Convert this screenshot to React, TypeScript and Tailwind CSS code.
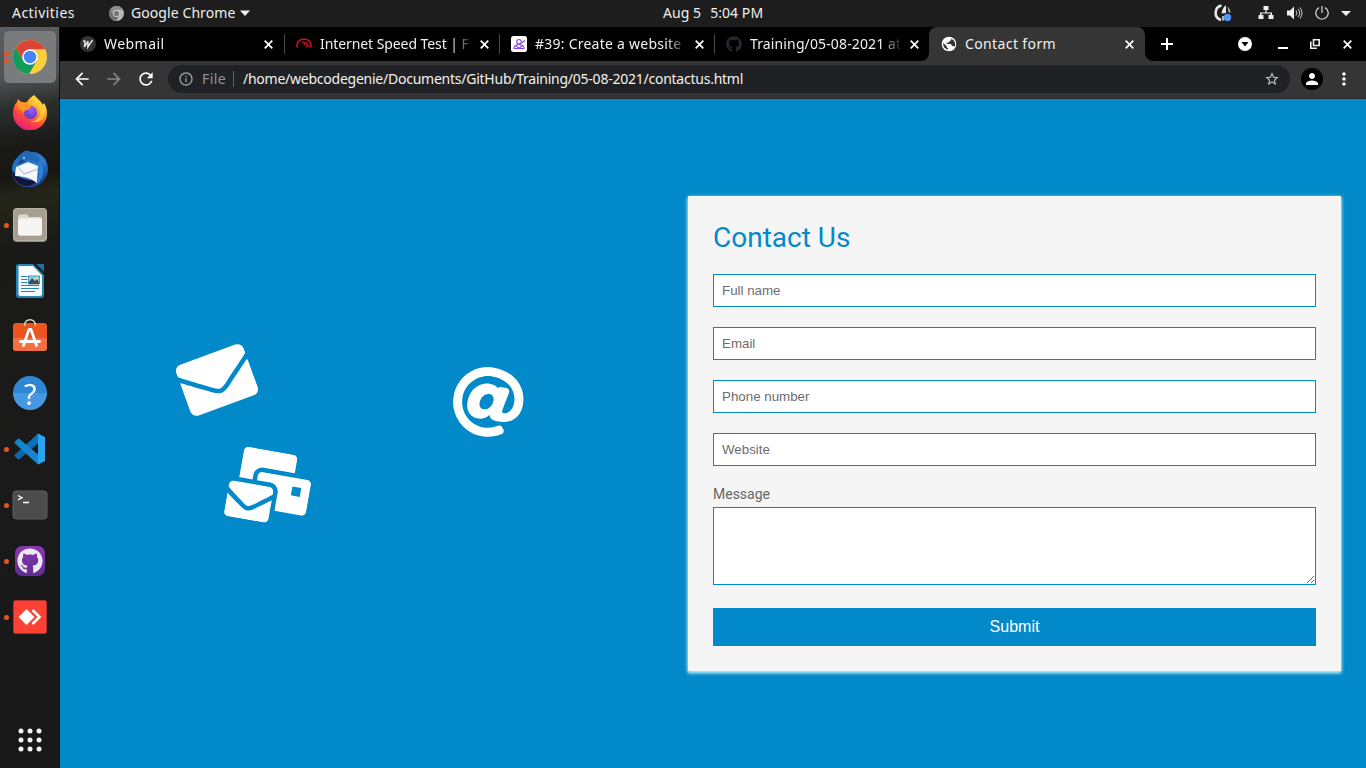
import React from "react";
import { FaEnvelope, FaMailBulk, FaAt, FaGithub } from "react-icons/fa";
import { MdArrowBack, MdArrowForward, MdRefresh, MdInfoOutline, MdStarBorder, MdPerson, MdMoreVert } from "react-icons/md";

function Chrome({ size, gray = false }: { size: number; gray?: boolean }) {
  const c = gray ? ["#8d8d8d", "#b9b9b9", "#6f6f6f", "#777", "#ddd"] : ["#db4437", "#ffcd40", "#0f9d58", "#4285f4", "#fff"];
  return (
    <svg width={size} height={size} viewBox="0 0 48 48">
      <circle cx="24" cy="24" r="24" fill={c[1]} />
      <path d="M24 13h21.3A24 24 0 0 0 3.9 11L14.5 29.5 24 24z" fill={c[0]} />
      <path d="M3.9 11A24 24 0 0 0 22.7 48L33.5 29.5 24 24l-9.5 5.5z" fill={c[2]} />
      <circle cx="24" cy="24" r="11" fill={c[4]} />
      <circle cx="24" cy="24" r="8.8" fill={c[3]} />
    </svg>
  );
}

const Firefox = () => (
  <svg className="-mt-[2px]" width="36" height="36" viewBox="0 0 36 36">
    <defs>
      <linearGradient id="ff" x1="0.8" y1="0" x2="0.25" y2="1">
        <stop offset="0" stopColor="#fff44f" />
        <stop offset=".35" stopColor="#ffa22b" />
        <stop offset=".65" stopColor="#ff4a3d" />
        <stop offset="1" stopColor="#e41686" />
      </linearGradient>
      <radialGradient id="ffp" cx=".55" cy=".3" r=".7">
        <stop offset="0" stopColor="#a05bff" />
        <stop offset="1" stopColor="#5b39c4" />
      </radialGradient>
    </defs>
    <path d="M22 1c2 2 4 4 6 6 1 1 2 2 2 4l2-2c2 3 3 6 3 10a17 17 0 0 1-34 1C1 15 2 11 5 8l1-3 4 4 5-1c1-2 4-5 7-7z" fill="url(#ff)" />
    <circle cx="18.500" cy="18.500" r="6.500" fill="url(#ffp)" />
    <path d="M6 8c4-1 7 0 9 3l4 1c0 2-2 3-4 4-2 0-3 2-4 3-1-3-3-4-5-5z" fill="#ff9424" />
    <path d="M20 10c5 0 9 4 8 10-1 5-6 8-10 7 9 4 16-3 15-11-1-5-5-9-9-12-2 2-2 4-4 6z" fill="#ffd13b" opacity=".75" />
  </svg>
);

const Thunderbird = () => (
  <svg width="38" height="38" viewBox="0 0 38 38">
    <defs>
      <linearGradient id="tb" x1=".2" y1="0" x2=".8" y2="1">
        <stop offset="0" stopColor="#1b63b5" />
        <stop offset=".5" stopColor="#2d7fd2" />
        <stop offset="1" stopColor="#17337c" />
      </linearGradient>
    </defs>
    <path d="M12 2c3-2 6-1 8 0 9-1 17 7 17 17 0 9-6 16-15 18C10 39 0 31 1 19c0-7 5-12 11-17z" fill="url(#tb)" />
    <path d="M1 20c6 8 16 12 26 10-3 3-5 5-9 6C9 37 1 30 1 20z" fill="#14143a" />
    <path d="M8 6c5-5 15-4 20 2l2 9c-5-6-10-8-17-7l-6 3z" fill="#2368b6" />
    <path d="M4 26l1-9 12-5 10 4-1 17q-9-7-22-7z" fill="#f4f6fa" />
    <path d="M6 16l7 8 14-5" fill="none" stroke="#a9b0bd" strokeWidth="1" />
    <path d="M6 15l4-5 5 1-7 3z" fill="#143f87" />
    <circle cx="13" cy="8" r=".9" fill="#cfe2f7" />
    <path d="M27 10c7 7 7 16-1 25 2-8 3-14 1-25z" fill="#2a83d4" />
  </svg>
);

const Files = () => (
  <svg width="36" height="36" viewBox="0 0 36 36">
    <rect x="1" y="1" width="34" height="34" rx="4" fill="#938b7c" />
    <rect x="1.500" y="1.500" width="33" height="32" rx="3.500" fill="#a69f91" stroke="#b8b2a5" />
    <path d="M6 10q0-2.500 2.500-2.500H15l2 2.500h11q2 0 2 2v14q0 2.500-2.500 2.500h-19Q6 28.500 6 26z" fill="#dedad2" />
    <rect x="6" y="11.500" width="24" height="17" rx="2.500" fill="#f6f5f3" />
  </svg>
);

const Writer = () => (
  <svg width="30" height="36" viewBox="0 0 30 36">
    <path d="M4 1h14l11 11v20q0 3-3 3H4q-3 0-3-3V4q0-3 3-3z" fill="#2585b5" />
    <path d="M3.500 3H18l9 9.500V31q0 2-2 2H5.500q-2 0-2-2z" fill="#f8fafb" />
    <path d="M21 1h8v8z" fill="#1c719c" />
    <path d="M6 13.500h6.500M6 16.500h6.500M6 19.500h6.500M6 22.500h18M6 25.500h18M6 28.500h14" stroke="#2683b3" strokeWidth="1.200" />
    <rect x="13.500" y="13" width="11" height="8" fill="#8ed1f1" stroke="#2683b3" strokeWidth=".8" />
    <path d="M14 21v-2l3-4 3 3 2-2 2 3v2z" fill="#4a4a4a" />
    <circle cx="22" cy="15" r="1.200" fill="#f8df59" />
  </svg>
);

const Software = () => (
  <svg className="-mt-[3px]" width="36" height="36" viewBox="0 0 36 36">
    <rect x="1" y="5" width="34" height="28" rx="3" fill="#e95420" />
    <path d="M1 20h34v10q0 3-3 3H4q-3 0-3-3z" fill="#f26f41" />
    <path d="M12.500 8c-.5-8.500 11.500-8.500 11 0" fill="none" stroke="#e2d7b5" strokeWidth="1.500" />
    <path d="M11.500 27.500l5.500-16h2l5.500 16M8.500 23.500h19" fill="none" stroke="#fff" strokeWidth="2.800" strokeLinejoin="round" strokeLinecap="round" />
  </svg>
);

const Help = () => (
  <span className="flex h-[34px] w-[34px] items-center justify-center rounded-full bg-linear-to-b from-[#2f86d4] from-50% to-[#4599e3] to-50% font-['Open_Sans',sans-serif] text-[29px] leading-none text-white">?</span>
);

const Code = () => (
  <svg width="34" height="34" viewBox="0 0 34 34">
    <path d="M25 1.500L2 22.500q-1 1 0 2L4.500 27q1 1 2 0L27 10z" fill="#0a68ad" />
    <path d="M25 32.500L2 11.500q-1-1 0-2L4.500 7q1-1 2 0L27 24z" fill="#1684cb" />
    <path d="M25 1.500l7 3.500v24l-7 3.500z" fill="#29a4ef" />
    <path d="M25 1.500V10L15.500 17 25 24v8.500l-10-10-6-5.500z" fill="#1986cf" opacity=".3" />
  </svg>
);

const Terminal = () => (
  <svg width="36" height="30" viewBox="0 0 36 30">
    <rect x="1" y="1" width="34" height="28" rx="3" fill="#4c4c4c" stroke="#5e5e5e" />
    <path d="M6 5.500l4 2.200-4 2.200M11 12.500h6" fill="none" stroke="#fff" strokeWidth="1.300" />
  </svg>
);

const GithubDesktop = () => (
  <span className="flex h-[30px] w-[30px] items-center justify-center rounded-[7px] bg-linear-to-b from-[#8a38b0] to-[#602b91]">
    <FaGithub className="size-[26px] text-[#ece8f2]" />
  </span>
);

const AnyDesk = () => (
  <svg width="34" height="34" viewBox="0 0 34 34">
    <rect x=".5" y=".5" width="33" height="33" rx="2" fill="#fb4235" stroke="#b23029" />
    <path d="M5.500 17l8-8 8 8-8 8z" fill="#fff" />
    <path d="M19.500 10l7 7-7 7" fill="none" stroke="#fff" strokeWidth="2.600" />
  </svg>
);

const dock = [
  { icon: <Firefox />, running: false },
  { icon: <Thunderbird />, running: false },
  { icon: <Files />, running: true },
  { icon: <Writer />, running: false },
  { icon: <Software />, running: false },
  { icon: <Help />, running: false },
  { icon: <Code />, running: true },
  { icon: <Terminal />, running: true },
  { icon: <GithubDesktop />, running: true },
  { icon: <AnyDesk />, running: true },
];

function Dock() {
  return (
    <aside className="flex w-[60px] shrink-0 flex-col border-r border-[#101010] bg-[linear-gradient(172deg,#5c5f61_0%,#505356_7%,#2b2f2b_11%,#1a1a18_16%,#161611_20%,#24251a_23%,#191917_30%,#1a1a1a_55%,#181818_100%)]">
      <div className="flex h-[58px] items-start pt-1 pl-1">
        <div className="relative flex h-[52px] w-[52px] items-center justify-center rounded-[5px] bg-[#797b7d]">
          <Chrome size={34} />
          <i className="absolute top-[20px] left-0 size-[5px] rounded-full bg-[#e95420]" />
          <i className="absolute top-[27px] left-0 size-[5px] rounded-full bg-[#e95420]" />
        </div>
      </div>
      <div className="flex flex-col">
        {dock.map((d, i) => (
          <div key={i} className="flex h-[56px] items-center">
            <i className={d.running ? "ml-1 size-[5px] rounded-full bg-[#e95420]" : "ml-1 size-[5px]"} />
            <div className="-ml-[4px] flex w-[50px] justify-center">{d.icon}</div>
          </div>
        ))}
      </div>
      <div className="mt-auto mb-[16px] flex justify-center">
        <svg width="24" height="24" viewBox="0 0 24 24" fill="#f4f4f4">
          {[3, 12, 21].map((y) => [3, 12, 21].map((x) => <circle key={`${x}-${y}`} cx={x} cy={y} r="2.500" />))}
        </svg>
      </div>
    </aside>
  );
}

function TopBar() {
  return (
    <header className="flex h-[27px] shrink-0 items-center bg-[#1d1d1d] pb-px text-[14px] leading-none text-[#efefef]">
      <div className="flex w-[663px] items-center pl-3">
        <span className="w-[97px] tracking-[0.46px]">Activities</span>
        <Chrome size={15} gray />
        <span className="pl-[7px] tracking-[0.08px]">Google Chrome</span>
        <svg className="ml-[5px]" width="10" height="6" fill="currentColor"><path d="M0 .5h10L5 6z" /></svg>
      </div>
      <div className="flex gap-[9px] tracking-[0.06px]">
        <span>Aug 5</span>
        <span>5:04 PM</span>
      </div>
      <div className="flex flex-1 items-center justify-end pr-[15px]">
        <svg width="18" height="18" viewBox="0 0 18 18">
          <path d="M7.500 1.500A7.500 7.500 0 0 0 7 16" fill="none" stroke="#e8e8e8" strokeWidth="2.600" />
          <path d="M9 16.500V12" stroke="#e8e8e8" strokeWidth="1.500" />
          <path d="M12 1v8l-4.500.500q.5-5 4.500-8.500z" fill="#e8e8e8" />
          <path d="M13.500 2.500q3 2.500 3 6.500l-2-1z" fill="#aaa" />
          <circle cx="13.500" cy="13.500" r="3.700" fill="#5294f5" />
        </svg>
        <svg className="ml-[26px]" width="16" height="14" viewBox="0 0 16 14" fill="#f0f0f0">
          <path d="M5.500 0h5v4H8.600v2.500H14V9h1.500v4h-5V9h2V7.500h-9V9h2v4h-5V9H2V6.500h5.400V4H5.500z" />
        </svg>
        <svg className="ml-[13px]" width="16" height="14" viewBox="0 0 16 14">
          <path d="M0 4.500h3l4-4v13l-4-4H0z" fill="#f0f0f0" />
          <path d="M9 4.500q2 2.500 0 5M11 3q3.500 4 0 8M13 1.500q4 5.500 0 11" fill="none" stroke="#d0d0d0" />
        </svg>
        <svg className="ml-3" width="14" height="14" viewBox="0 0 14 14" fill="none" stroke="#d9d9d9" strokeWidth="1.200">
          <path d="M4 1.600a6.200 6.200 0 1 0 6 0M7 0v7" />
        </svg>
        <svg className="ml-[12px]" width="10" height="5" fill="currentColor"><path d="M0 0h10L5 5z" /></svg>
      </div>
    </header>
  );
}

const Close = () => (
  <svg width="9" height="9" viewBox="0 0 9 9" stroke="#fff" strokeWidth="1.700"><path d="M.7.7l7.600 7.600M8.300.7L.7 8.300" /></svg>
);

const WebmailIcon = () => (
  <svg width="16" height="16" viewBox="0 0 16 16">
    <circle cx="8" cy="8" r="8" fill="#333" />
    <path d="M3 5l2 .2L4.500 11 8 5l-.2 6L12.500 4" fill="none" stroke="#e8e8e8" strokeWidth="1.400" />
  </svg>
);
const SpeedIcon = () => (
  <svg width="16" height="16" viewBox="0 0 16 16" fill="none" stroke="#d4101f">
    <path d="M1.200 11.500C0 6.500 3.500 3 8 3s8 3.500 6.800 8.500" strokeWidth="1.500" />
    <path d="M6 6.200q4-.5 5.500 2l2 3M7.500 8q2.500 0 4 3.500" strokeWidth="1.200" />
  </svg>
);
const PurpleIcon = () => (
  <svg width="16" height="16" viewBox="0 0 16 16" fill="none" stroke="#8b45e6" strokeWidth="1.100">
    <rect width="16" height="16" rx="2.500" fill="#fff" stroke="none" />
    <circle cx="8" cy="5.800" r="2.300" />
    <path d="M3 12.500q0-3 2.500-2.500l2.500 2.500 2.500-2.500q2.500-.5 2.500 2.500zM3.500 10L8 8l4.500 2M10.500 7L14 4.500" />
  </svg>
);
const GlobeIcon = () => (
  <svg width="16" height="16" viewBox="0 0 16 16">
    <circle cx="8" cy="8" r="7.300" fill="#fff" />
    <path d="M10.300 2.800q.2 2-1.800 2.300l-.4 1.500H5.800v1.500h3.600q1.400.2 1.400 1.900h1.700q.7 0 1 1A5.800 5.800 0 0 0 10.300 2.800zM2.300 7q-.8 5 4.800 6.700v-1.400q-1.500-.3-1.400-2z" fill="#353535" />
  </svg>
);

function Tab({ icon, title, spacing, last = false }: { icon: React.ReactNode; title: string; spacing: string; last?: boolean }) {
  return (
    <div className="flex w-[215px] shrink-0 items-center pl-[11px] first:pl-[10px]">
      <span className="flex size-4 shrink-0 items-center justify-center">{icon}</span>
      <span className={`ml-2 w-[153px] shrink-0 mask-r-from-86% mask-r-to-100% whitespace-nowrap ${spacing}`}>{title}</span>
      <span className="ml-[7px]"><Close /></span>
      {!last && <i className="ml-auto h-5 w-px shrink-0 bg-[#494c50]" />}
    </div>
  );
}

function TabStrip() {
  return (
    <div className="flex h-[34px] shrink-0 bg-[linear-gradient(to_right,#353535_50%,#353535_70%,#000_70%)] text-[14px] leading-5 text-[#f0f0f0]">
      <div className="flex w-[869px] shrink-0 overflow-hidden rounded-br-[8px] bg-black pl-[10px]">
        <Tab icon={<WebmailIcon />} title="Webmail" spacing="tracking-[0.45px]" />
        <Tab icon={<SpeedIcon />} title="Internet Speed Test | F" spacing="tracking-[-0.08px]" />
        <Tab icon={<PurpleIcon />} title="#39: Create a website" spacing="tracking-[0.24px]" />
        <Tab icon={<FaGithub className="size-4 text-[#24292f]" />} title="Training/05-08-2021 at" spacing="tracking-[0.13px]" last />
      </div>
      <div className="flex w-[216px] shrink-0 bg-black">
        <div className="flex w-full items-center rounded-t-[8px] bg-[#353535] pl-[12px]">
          <GlobeIcon />
          <span className="ml-[8px] w-[160px] tracking-[0.38px]">Contact form</span>
          <Close />
        </div>
      </div>
      <div className="flex flex-1 bg-[#353535]">
        <div className="flex flex-1 items-center rounded-bl-[8px] bg-black text-white">
          <svg className="ml-4" width="12" height="12" stroke="#fff" strokeWidth="2"><path d="M6 0v12M0 6h12" /></svg>
          <svg className="ml-[65px]" width="14" height="14" viewBox="0 0 14 14"><circle cx="7" cy="7" r="7" fill="#fff" /><path d="M3.500 5h7L7 9.500z" fill="#000" /></svg>
          <i className="mt-[7px] ml-[26px] h-[2px] w-[10px] bg-white" />
          <svg className="ml-[22px]" width="10" height="10" viewBox="0 0 10 10" fill="none" stroke="#eee" strokeWidth="1.600"><path d="M3.500.800h5.700v5.700H3.500zM.8 2.500v6.700h6" /></svg>
          <span className="ml-[23px]"><Close /></span>
        </div>
      </div>
    </div>
  );
}

function Toolbar() {
  return (
    <div className="flex h-[38px] shrink-0 items-center border-b border-[#28292b] bg-[#353535] pb-px text-[14px] leading-none">
      <MdArrowBack className="ml-3 size-5 text-white" />
      <MdArrowForward className="ml-3 size-5 text-[#858585]" />
      <MdRefresh className="ml-3 size-5 text-white" />
      <div className="ml-3 flex h-7 w-[1122px] items-center rounded-full bg-[#202124]">
        <MdInfoOutline className="ml-[10px] size-4 text-[#9aa0a6]" />
        <span className="ml-2 w-[31px] tracking-[0.4px] text-[#8f9499]">File</span>
        <i className="h-4 w-px bg-[#5f6368]" />
        <span className="ml-[9px] tracking-[-0.243px] whitespace-nowrap text-[#f1f1f1]">/home/webcodegenie/Documents/GitHub/Training/05-08-2021/contactus.html</span>
        <MdStarBorder className="mr-[10px] ml-auto size-4 text-[#c4c7ca]" />
      </div>
      <span className="ml-[11px] flex size-[22px] items-center justify-center rounded-full bg-black"><MdPerson className="size-[18px] text-white" /></span>
      <MdMoreVert className="ml-[11px] size-5 text-white" />
    </div>
  );
}

const field = "block h-[33px] w-full border border-[#0189c9] bg-white px-2 font-['Liberation_Sans',sans-serif] text-[13.333px] outline-none placeholder:text-[#6d6d6d]";

function ContactPage() {
  return (
    <main className="relative flex flex-1 justify-end bg-[#0189c9] pt-[97px] pr-[25px]">
      <FaEnvelope className="absolute top-[245px] left-[121px] size-[72px] -rotate-20 text-white" />
      <FaMailBulk className="absolute top-[352px] left-[169px] h-[72px] w-[81px] rotate-10 text-white" />
      <FaAt className="absolute top-[267px] left-[392px] size-[72px] rotate-10 text-white" />
      <form className="h-[475px] w-[653px] bg-[#f5f5f5] p-[25px] font-[Roboto,sans-serif] shadow-[0_1px_4px_0px_#a5eef6,0_2px_3px_0px_#a5e4f0]">
        <h1 className="mb-[20px] text-[28px] leading-[33px] font-normal text-[#0189c9]">Contact Us</h1>
        <div className="flex flex-col gap-5">
          <input className={field} placeholder="Full name" />
          <input className={field} placeholder="Email" />
          <input className={field} placeholder="Phone number" />
          <input className={field} placeholder="Website" />
        </div>
        <label className="mt-5 block text-[14px] leading-4 text-[#666]">Message</label>
        <textarea className="mt-[5px] block h-[78px] w-full resize border border-[#0189c9] bg-white outline-none" />
        <button type="button" className="mt-[23px] block h-[38px] w-full bg-[#0189c9] font-['Liberation_Sans',sans-serif] text-[16px] text-white">Submit</button>
      </form>
    </main>
  );
}

export default function App() {
  return (
    <div className="flex h-[768px] w-[1366px] flex-col overflow-hidden font-['Noto_Sans','Open_Sans',sans-serif]">
      <TopBar />
      <div className="flex min-h-0 flex-1">
        <Dock />
        <div className="flex min-w-0 flex-1 flex-col bg-[#353535]">
          <TabStrip />
          <Toolbar />
          <ContactPage />
        </div>
      </div>
    </div>
  );
}
